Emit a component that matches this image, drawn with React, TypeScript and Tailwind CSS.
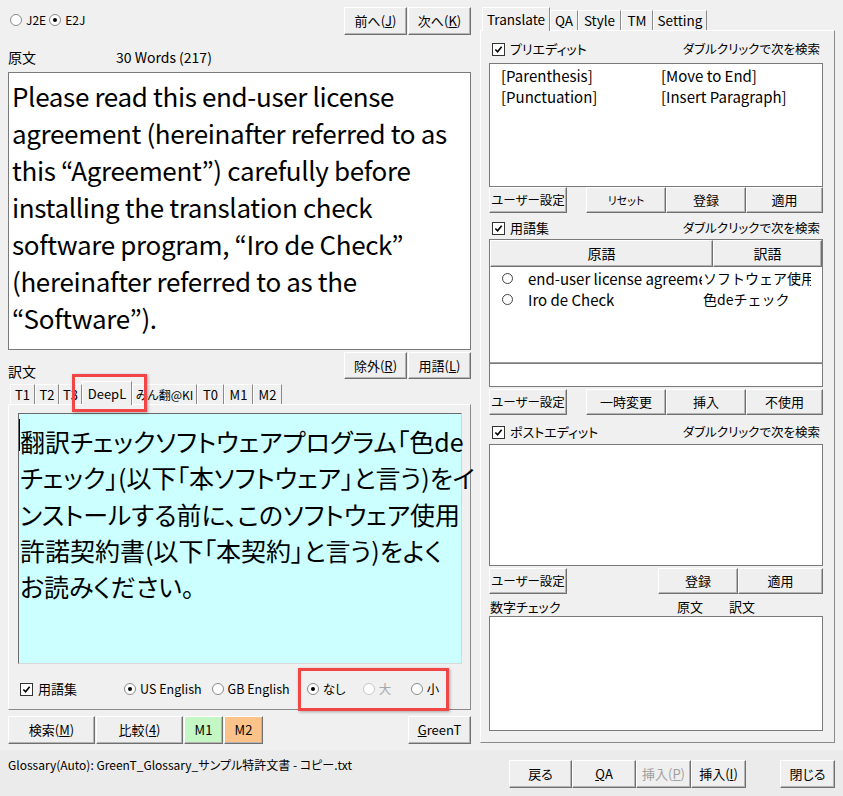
import type { ReactNode } from 'react';

const ui = "font-['Meiryo_UI','Noto_Sans_CJK_JP',sans-serif] [font-feature-settings:'palt']";

function Btn({
  children,
  className = '',
  disabled = false,
}: {
  children: ReactNode;
  className?: string;
  disabled?: boolean;
}) {
  return (
    <div
      className={`flex shrink-0 items-center justify-center whitespace-nowrap border border-t-white border-l-white border-r-[#707070] border-b-[#707070] bg-[#efefef] text-[13px] shadow-[inset_-1px_-1px_0_#b4b4b4] ${
        disabled ? 'text-[#a0a0a0]' : 'text-black'
      } ${className}`}
    >
      {children}
    </div>
  );
}

function Check({ label }: { label: string }) {
  return (
    <div className="flex items-center gap-[5px] text-[13px]">
      <span className="flex h-[13px] w-[13px] items-center justify-center border border-[#333] bg-white">
        <svg viewBox="0 0 10 10" className="h-[9px] w-[9px]">
          <path d="M1.5 5 L4 7.5 L8.5 2" stroke="black" strokeWidth="1.8" fill="none" />
        </svg>
      </span>
      <span>{label}</span>
    </div>
  );
}

function Radio({ label, checked = false, disabled = false }: { label: string; checked?: boolean; disabled?: boolean }) {
  return (
    <div className="flex items-center gap-[4px]">
      <span
        className={`flex h-[12px] w-[12px] items-center justify-center rounded-full border bg-white ${
          disabled ? 'border-[#c8c8c8]' : 'border-[#8a8a8a]'
        }`}
      >
        {checked && <span className="h-[4px] w-[4px] rounded-full bg-black" />}
      </span>
      <span className={disabled ? 'text-[#a8a8a8]' : ''}>{label}</span>
    </div>
  );
}

function Tab({ label, w, active = false, size }: { label: string; w: string; active?: boolean; size: string }) {
  return (
    <div
      className={`flex shrink-0 items-center justify-center overflow-hidden whitespace-nowrap border-t border-l border-r border-t-white border-l-white border-r-[#8a8a8a] ${size} ${w} ${
        active ? 'z-10 -mb-px h-[24px] bg-[#f0f0f0]' : 'h-[20px]'
      }`}
    >
      {label}
    </div>
  );
}

const u = (s: string) => <span className="underline">{s}</span>;

export default function App() {
  return (
    <div className={`relative flex h-[796px] w-[843px] flex-col overflow-hidden bg-[#f0f0f0] text-[12px] text-black ${ui}`}>
      <div className="flex h-[750px]">
        {/* left column */}
        <div className="flex w-[480px] flex-col pl-[8px] pr-[9px] pt-[7px]">
          <div className="flex h-[28px] items-center">
            <div className="ml-[2px] flex items-center gap-[3px] pb-[2px]">
              <Radio label="J2E" />
              <Radio label="E2J" checked />
            </div>
            <div className="ml-auto flex gap-[1px]">
              <Btn className="h-[28px] w-[63px]">前へ({u('J')})</Btn>
              <Btn className="h-[28px] w-[63px]">次へ({u('K')})</Btn>
            </div>
          </div>
          <div className="mt-[14px] flex h-[16px] items-center text-[14px]">
            <span className="w-[108px]">原文</span>
            <span>30 Words (217)</span>
          </div>
          <div className="mt-[7px] h-[278px] border border-[#7a7a7a] bg-white pl-[3px] pt-[4px] text-[26px] leading-[37px] tracking-[-0.35px] whitespace-nowrap">
            Please read this end-user license
            <br />
            agreement (hereinafter referred to as
            <br />
            this “Agreement”) carefully before
            <br />
            installing the translation check
            <br />
            software program, “Iro de Check”
            <br />
            (hereinafter referred to as the
            <br />
            “Software”).
          </div>
          <div className="mt-[2px] flex h-[27px]">
            <span className="self-end text-[14px] leading-[16px]">訳文</span>
            <div className="ml-auto flex gap-[1px]">
              <Btn className="h-[27px] w-[63px]">除外({u('R')})</Btn>
              <Btn className="h-[27px] w-[63px]">用語({u('L')})</Btn>
            </div>
          </div>
          <div className="mt-[2px] flex h-[23px] items-end pl-[2px]">
            <Tab size="text-[13px]" w="w-[25px]" label="T1" />
            <Tab size="text-[13px]" w="w-[24px]" label="T2" />
            <Tab size="text-[13px]" w="w-[23px]" label="T3" />
            <Tab size="text-[13px]" w="w-[50px]" label="DeepL" active />
            <Tab size="text-[12px]" w="w-[65px]" label="みん翻@KI" />
            <Tab size="text-[13px]" w="w-[27px]" label="T0" />
            <Tab size="text-[13px]" w="w-[29px]" label="M1" />
            <Tab size="text-[13px]" w="w-[29px]" label="M2" />
          </div>
          <div className="flex h-[306px] flex-col border border-t-white border-l-white border-r-[#8a8a8a] border-b-[#8a8a8a] pl-[9px] pr-[8px] pt-[8px]">
            <div className="h-[251px] border border-t-[#6a6a6a] border-l-[#6a6a6a] border-r-[#d8d8d8] border-b-[#d8d8d8] bg-[#ccffff] pl-[1px] pt-[9px] text-[25px] leading-[36.3px] whitespace-nowrap">
              <span className="relative">
                <span className="absolute -left-[1px] top-[-4px] h-[32px] w-[1px] bg-black" />
                翻訳チェックソフトウェアプログラム「色de
              </span>
              <br />
              チェック」(以下「本ソフトウェア」と言う)をイ
              <br />
              ンストールする前に、このソフトウェア使用
              <br />
              許諾契約書(以下「本契約」と言う)をよく
              <br />
              お読みください。
            </div>
            <div className="mt-[14px] flex h-[22px] items-center text-[12.5px]">
              <div className="ml-[2px]">
                <Check label="用語集" />
              </div>
              <div className="ml-[47px] flex items-center gap-[10px]">
                <Radio label="US English" checked />
                <Radio label="GB English" />
              </div>
              <div className="ml-[17px] flex items-center">
                <div className="w-[56px]">
                  <Radio label="なし" checked />
                </div>
                <div className="w-[48px]">
                  <Radio label="大" disabled />
                </div>
                <Radio label="小" />
              </div>
            </div>
          </div>
          <div className="mt-[6px] flex h-[28px] gap-[1px]">
            <Btn className="h-[28px] w-[87px]">検索({u('M')})</Btn>
            <Btn className="h-[28px] w-[87px]">比較({u('4')})</Btn>
            <Btn className="h-[28px] w-[39px] !bg-[#c4f7c4]">M1</Btn>
            <Btn className="h-[28px] w-[39px] !bg-[#fbc38a]">M2</Btn>
            <Btn className="ml-auto h-[28px] w-[63px]">{u('G')}reenT</Btn>
          </div>
        </div>

        {/* right column */}
        <div className="flex w-[363px] flex-col pt-[8px]">
          <div className="flex h-[22px] items-end pl-[2px]">
            <Tab size="text-[13.5px]" w="w-[68px]" label="Translate" active />
            <Tab size="text-[13.5px]" w="w-[28px]" label="QA" />
            <Tab size="text-[13.5px]" w="w-[43px]" label="Style" />
            <Tab size="text-[13.5px]" w="w-[32px]" label="TM" />
            <Tab size="text-[13.5px]" w="w-[54px]" label="Setting" />
          </div>
          <div className="flex h-[713px] w-[355px] flex-col border border-t-white border-l-white border-r-[#8a8a8a] border-b-[#8a8a8a] pl-[8px] pr-[11px]">
            <div className="mt-[10px] flex h-[16px] items-center pl-[3px]">
              <Check label="プリエディット" />
              <span className="ml-auto pr-[3px] text-[12.5px]">ダブルクリックで次を検索</span>
            </div>
            <div className="mt-[6px] h-[124px] border border-[#7a7a7a] bg-white pl-[11px] pt-[1px] text-[15px] leading-[21px]">
              <div className="flex">
                <span className="w-[160px]">[Parenthesis]</span>
                <span>[Move to End]</span>
              </div>
              <div className="flex">
                <span className="w-[160px]">[Punctuation]</span>
                <span>[Insert Paragraph]</span>
              </div>
            </div>
            <div className="flex h-[26px]">
              <Btn className="h-[26px] w-[78px] !text-[12.5px]">ユーザー設定</Btn>
              <Btn className="ml-[19px] h-[26px] w-[80px] !text-[11px]">リセット</Btn>
              <Btn className="h-[26px] w-[80px]">登録</Btn>
              <Btn className="h-[26px] w-[77px]">適用</Btn>
            </div>
            <div className="mt-[7px] flex h-[16px] items-center pl-[3px]">
              <Check label="用語集" />
              <span className="ml-auto pr-[3px] text-[12.5px]">ダブルクリックで次を検索</span>
            </div>
            <div className="mt-[3px] flex h-[125px] flex-col border border-[#7a7a7a] bg-white">
              <div className="flex h-[27px]">
                <Btn className="h-[27px] w-[223px] !text-[14px]">原語</Btn>
                <Btn className="h-[27px] flex-1 !text-[14px]">訳語</Btn>
              </div>
              <div className="pt-[1px] text-[15px] leading-[21px]">
                {[
                  ['end-user license agreement', 'ソフトウェア使用許諾契約書'],
                  ['Iro de Check', '色deチェック'],
                ].map(([src, tgt]) => (
                  <div key={src} className="flex items-center">
                    <span className="ml-[12px] h-[11px] w-[11px] shrink-0 rounded-full border border-[#444]" />
                    <span className="ml-[15px] w-[174px] shrink-0 overflow-hidden whitespace-nowrap">{src}</span>
                    <span className="ml-[1px] w-[108px] shrink-0 overflow-hidden whitespace-nowrap text-[14px] [font-feature-settings:normal]">
                      {tgt}
                    </span>
                  </div>
                ))}
              </div>
              <div className="mt-auto h-[1px] bg-[#a0a0a0]" />
            </div>
            <div className="h-[23px] border border-t-0 border-[#7a7a7a] bg-white" />
            <div className="mt-[2px] flex h-[26px]">
              <Btn className="h-[26px] w-[78px] !text-[12.5px]">ユーザー設定</Btn>
              <Btn className="ml-[19px] h-[26px] w-[80px]">一時変更</Btn>
              <Btn className="h-[26px] w-[80px]">挿入</Btn>
              <Btn className="h-[26px] w-[77px]">不使用</Btn>
            </div>
            <div className="mt-[9px] flex h-[16px] items-center pl-[3px]">
              <Check label="ポストエディット" />
              <span className="ml-auto pr-[3px] text-[12.5px]">ダブルクリックで次を検索</span>
            </div>
            <div className="mt-[4px] h-[122px] border border-[#7a7a7a] bg-white" />
            <div className="mt-[2px] flex h-[26px]">
              <Btn className="h-[26px] w-[78px] !text-[12.5px]">ユーザー設定</Btn>
              <Btn className="ml-[91px] h-[26px] w-[80px]">登録</Btn>
              <Btn className="h-[26px] w-[85px]">適用</Btn>
            </div>
            <div className="mt-[5px] flex h-[16px] items-center pl-[1px] text-[13px]">
              <span className="w-[187px]">数字チェック</span>
              <span className="w-[52px]">原文</span>
              <span>訳文</span>
            </div>
            <div className="mt-[1px] h-[115px] border border-[#7a7a7a] bg-white" />
          </div>
        </div>
      </div>

      {/* status bar */}
      <div className="flex h-[46px] bg-[#ebebeb]">
        <div className="pl-[8px] pt-[7px] text-[12px] leading-[16px]">
          Glossary(Auto): GreenT_Glossary_サンプル特許文書 - コピー.txt
        </div>
        <div className="ml-auto flex pr-[8px] pt-[10px]">
          <Btn className="h-[28px] w-[63px]">戻る</Btn>
          <Btn className="h-[28px] w-[64px]">{u('Q')}A</Btn>
          <Btn className="h-[28px] w-[55px]" disabled>
            挿入({u('P')})
          </Btn>
          <Btn className="h-[28px] w-[55px]">挿入({u('I')})</Btn>
          <Btn className="ml-[34px] h-[28px] w-[55px]">閉じる</Btn>
        </div>
      </div>

      {/* red highlight boxes */}
      <div className="pointer-events-none absolute left-[72px] top-[374px] h-[38px] w-[75px] border-[3px] border-[#f24646] shadow-[1px_1px_3px_rgba(0,0,0,0.3)]" />
      <div className="pointer-events-none absolute left-[298px] top-[668px] h-[43px] w-[151px] border-[3px] border-[#f24646] shadow-[1px_1px_3px_rgba(0,0,0,0.3)]" />
    </div>
  );
}
